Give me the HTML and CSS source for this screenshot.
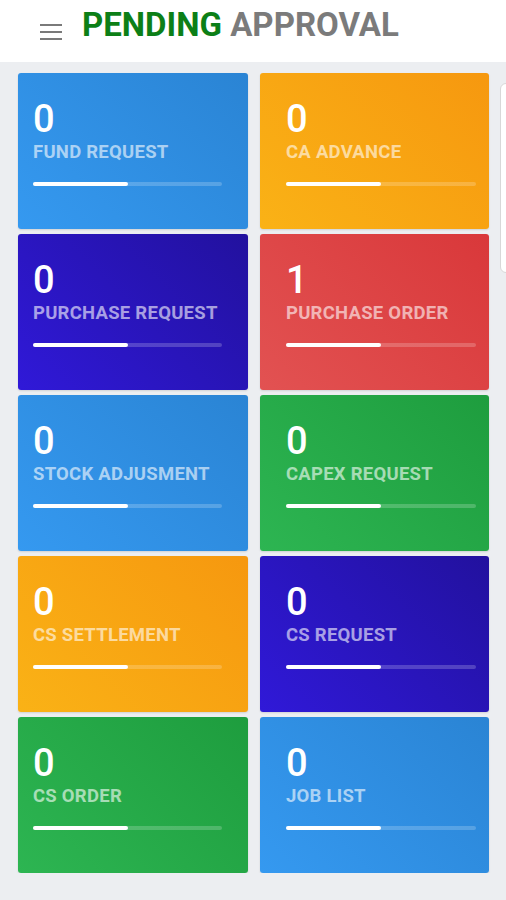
FILE: index.html
```html
<!DOCTYPE html>
<html>
<head>
<meta charset="utf-8">
<title>Pending Approval</title>
<link rel="stylesheet" href="styles.css">
</head>
<body>
<div class="header">
	<span class="burger"><i></i><i></i><i></i></span>
	<h1><span class="hl">PENDING</span> APPROVAL</h1>
</div>
<div class="edge"></div>
<div class="tiles">
	<div class="tile blue">
		<div class="num">0</div>
		<div class="label">FUND REQUEST</div>
		<div class="bar"><span></span></div>
	</div>
	<div class="tile orange">
		<div class="num">0</div>
		<div class="label">CA ADVANCE</div>
		<div class="bar"><span></span></div>
	</div>
	<div class="tile indigo">
		<div class="num">0</div>
		<div class="label">PURCHASE REQUEST</div>
		<div class="bar"><span></span></div>
	</div>
	<div class="tile red">
		<div class="num">1</div>
		<div class="label">PURCHASE ORDER</div>
		<div class="bar"><span></span></div>
	</div>
	<div class="tile blue">
		<div class="num">0</div>
		<div class="label">STOCK ADJUSMENT</div>
		<div class="bar"><span></span></div>
	</div>
	<div class="tile green">
		<div class="num">0</div>
		<div class="label">CAPEX REQUEST</div>
		<div class="bar"><span></span></div>
	</div>
	<div class="tile orange">
		<div class="num">0</div>
		<div class="label">CS SETTLEMENT</div>
		<div class="bar"><span></span></div>
	</div>
	<div class="tile indigo">
		<div class="num">0</div>
		<div class="label">CS REQUEST</div>
		<div class="bar"><span></span></div>
	</div>
	<div class="tile green">
		<div class="num">0</div>
		<div class="label">CS ORDER</div>
		<div class="bar"><span></span></div>
	</div>
	<div class="tile blue">
		<div class="num">0</div>
		<div class="label">JOB LIST</div>
		<div class="bar"><span></span></div>
	</div>
</div>
</body>
</html>
```
FILE: styles.css
```css
body{ margin:0; background:#eceef1; font-family:Roboto, "Liberation Sans", sans-serif; overflow:hidden; }

.header{ height:62px; background:#fff; display:flex; align-items:flex-start; }
.burger{ display:flex; flex-direction:column; gap:5px; width:22px; margin:24px 20px 0 40px; }
.burger i{ display:block; height:2px; background:#7a7a7a; }
.header h1{ margin:5px 0 0 0; font-size:33px; line-height:40px; font-weight:700; color:#7b7b7b; }
.header h1 .hl{ color:#0c7f17; }

.edge{ position:absolute; left:500px; top:83px; width:20px; height:188px; background:#fff; border:1px solid #d8d8d8; border-radius:6px; }

.tiles{ display:grid; grid-template-columns:230px 229px; grid-auto-rows:156px; column-gap:12px; row-gap:5px; padding:11px 0 0 18px; }
.tile{ border-radius:3px; padding:27px 26px 0 15px; color:#fff; box-shadow:0 1px 2px rgba(0,0,0,0.12); }
.tile:nth-child(even){ padding:27px 13px 0 26px; }
.tile .num{ font-size:38px; line-height:38px; font-weight:500; }
.tile .label{ font-size:18.5px; line-height:20px; font-weight:700; letter-spacing:0.25px; margin-top:4px; color:rgba(255,255,255,0.6); white-space:nowrap; }
.tile .bar{ height:4px; margin-top:20px; border-radius:2px; background:rgba(255,255,255,0.2); }
.tile .bar span{ display:block; width:50%; height:100%; border-radius:2px; background:#fff; }

.blue{ background:linear-gradient(45deg, #3599f0, #2a84d4); }
.orange{ background:linear-gradient(45deg, #fab216, #f6980f); }
.indigo{ background:linear-gradient(45deg, #3019d8, #22119e); }
.red{ background:linear-gradient(45deg, #e25252, #d9383a); }
.green{ background:linear-gradient(45deg, #2db552, #1e9d3e); }
```
